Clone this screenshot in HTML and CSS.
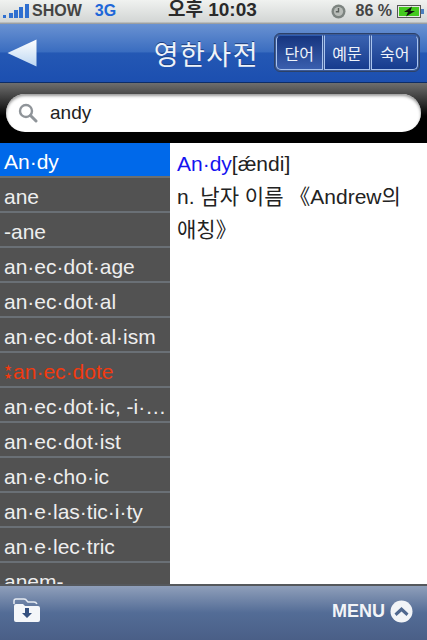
FILE: index.html
```html
<!DOCTYPE html>
<html lang="ko">
<head>
<meta charset="utf-8">
<title>영한사전</title>
<link rel="stylesheet" href="styles.css">
</head>
<body>
<div class="app">
  <header class="status">
    <div class="status-left">
      <svg class="signal" width="27" height="14" viewBox="0 0 27 14"><g fill="#2f6fd0"><rect x="1" y="11" width="3" height="3"/><rect x="7" y="9" width="4" height="5"/><rect x="12" y="6" width="4" height="8"/><rect x="17" y="3" width="4" height="11"/><rect x="23" y="0" width="4" height="14"/></g></svg>
      <span class="carrier">SHOW</span>
      <span class="net">3G</span>
    </div>
    <div class="clock">오후 10:03</div>
    <div class="status-right">
      <svg class="alarm" width="15" height="15" viewBox="0 0 15 15"><circle cx="7.5" cy="7.5" r="7" fill="#7d8480"/><circle cx="7.5" cy="7.5" r="4.6" fill="#b9bdb9"/><path d="M7.5 4v3.7H4.8" fill="none" stroke="#5c625e" stroke-width="1.4"/></svg>
      <span class="pct">86 %</span>
      <svg class="battery" width="27" height="13" viewBox="0 0 27 13"><rect x="0.5" y="0.5" width="23" height="12" fill="#e8eae6" stroke="#555"/><rect x="2" y="2" width="20" height="9" fill="#43c91e"/><rect x="24" y="4" width="3" height="5" fill="#4a7fc0"/><path d="M15 1.5 7 7h4l-2 4.5L18 6h-4.500z" fill="#111"/></svg>
    </div>
  </header>

  <nav class="nav">
    <button class="back" aria-label="뒤로">
      <svg width="30" height="28" viewBox="0 0 31 30" preserveAspectRatio="none"><defs><linearGradient id="backfill" x1="0" y1="0" x2="0" y2="1"><stop offset="0" stop-color="#fff"/><stop offset="1" stop-color="#bcd6f2"/></linearGradient></defs><path d="M0.500 15 30.500 0.500V29.500z" fill="url(#backfill)"/></svg>
    </button>
    <h1 class="title">영한사전</h1>
    <div class="seg">
      <span class="seg-item seg-on">단어</span>
      <span class="seg-item">예문</span>
      <span class="seg-item">숙어</span>
    </div>
  </nav>

  <div class="searchbar">
    <div class="field">
      <svg class="lens" width="20" height="20" viewBox="0 0 20 20"><circle cx="8" cy="8" r="6" fill="none" stroke="#8f9499" stroke-width="2.400"/><path d="M12.500 12.500 18 18" stroke="#8f9499" stroke-width="3" stroke-linecap="round"/></svg>
      <span class="query">andy</span>
    </div>
  </div>

  <main class="content">
    <ul class="list">
      <li class="row row-on">An·dy</li>
      <li class="row">ane</li>
      <li class="row">-ane</li>
      <li class="row">an·ec·dot·age</li>
      <li class="row">an·ec·dot·al</li>
      <li class="row">an·ec·dot·al·ism</li>
      <li class="row row-star"><span class="stars">★<br>★</span><span>an·ec·dote</span></li>
      <li class="row">an·ec·dot·ic, -i·cal</li>
      <li class="row">an·ec·dot·ist</li>
      <li class="row">an·e·cho·ic</li>
      <li class="row">an·e·las·tic·i·ty</li>
      <li class="row">an·e·lec·tric</li>
      <li class="row">anem-</li>
    </ul>
    <article class="entry">
      <p class="line"><span class="head">An·dy</span>[ǽndi]</p>
      <p class="line">n. 남자 이름 《Andrew의 애칭》</p>
    </article>
  </main>

  <footer class="toolbar">
    <svg class="folder" width="28" height="26" viewBox="0 0 28 26"><path d="M1 6V3q0-2 2-2h8q2 0 3 2l1 1h6q2 0 3 2" fill="none" stroke="#e6ebf2" stroke-width="1.500"/><path d="M1 8q0-2 2-2h7l2 2h13q2 0 2 2v12q0 2-2 2H3q-2 0-2-2z" fill="#f4f6f9"/><path d="M12 10h4v5h3l-5 5-5-5h3z" fill="#34507f"/></svg>
    <div class="menu">
      <span>MENU</span>
      <svg width="23" height="23" viewBox="0 0 23 23"><circle cx="11.500" cy="11.500" r="11" fill="#f2f4f7"/><path d="M4.500 13.500 11.500 7l7 6.500-2 2.500-5-4.500-5 4.500z" fill="#50688f"/></svg>
    </div>
  </footer>
</div>
</body>
</html>
```
FILE: styles.css
```css
* { box-sizing: border-box; margin: 0; padding: 0; }
html, body { width: 427px; height: 640px; overflow: hidden; background: #000; }
body { font-family: "Liberation Sans", "Noto Sans CJK KR", sans-serif; }
.app { width: 427px; height: 640px; display: flex; flex-direction: column; overflow: hidden; }

.status {
  height: 24px; flex: none; display: flex; align-items: center; justify-content: space-between;
  padding: 0 3px 2px 2px; background: linear-gradient(#f0f2f0, #d3d6d5 90%, #8e9194);
  position: relative;
}
.status-left { display: flex; align-items: center; }
.carrier { font-size: 16px; font-weight: bold; color: #444; margin-left: 3px; }
.net { font-size: 16px; font-weight: bold; color: #2067d8; margin-left: 13px; }
.clock { font-size: 19px; line-height: 22px; font-weight: bold; color: #2a2a2a; position: absolute; left: 168px; top: -1px; white-space: nowrap; }
.status-right { display: flex; align-items: center; }
.alarm { margin-right: 10px; }
.pct { font-size: 16px; font-weight: bold; color: #454545; margin-right: 5px; }

.nav {
  height: 59px; flex: none; display: flex; align-items: center; position: relative;
  padding: 0 7px 0 6px; border-bottom: 1px solid #0d2c66;
  background: linear-gradient(#6a92d2, #3a6dc0 48%, #2458b4 50%, #1c4fb0);
}
.back { border: 0; background: none; display: flex; margin-left: 1px; }
.title {
  font-size: 27px; font-weight: normal; color: #eef3fa; margin-left: auto; margin-right: 15px;
  letter-spacing: 1.5px; text-shadow: 0 -1px 0 #1c3f80;
}
.seg {
  width: 146px; height: 39px; display: flex; border: 1px solid #2c4168; border-radius: 6px; padding: 1px;
  background: #3c5a96; gap: 1px; margin-top: -1px;
}
.seg-item {
  flex: 1; display: flex; align-items: center; justify-content: center;
  font-size: 16px; color: #eef3fa; background: linear-gradient(#3a62b0, #173c8e);
  border: 1px solid #a9c4ee; border-top-color: #2c5bb0;
}
.seg-item:first-child { border-radius: 5px 0 0 5px; }
.seg-item:last-child { border-radius: 0 5px 5px 0; }
.seg-on { background: linear-gradient(#16357f, #3a5fae); }

.searchbar {
  height: 60px; flex: none; padding: 11px 6px 11px;
  background: linear-gradient(#6e6e6e, #2b2b2b 35%, #000 55%, #000);
}
.field {
  height: 38px; display: flex; align-items: center; padding-left: 12px;
  background: #fff; border-radius: 19px; box-shadow: inset 0 2px 3px #999;
}
.lens { flex: none; }
.query { font-size: 19px; color: #222; margin-left: 12px; }

.content { flex: 1; display: flex; min-height: 0; background: #fff; }
.list { width: 170px; flex: none; list-style: none; overflow: hidden; background: #525252; }
.row {
  height: 35px; padding: 0 0 0 4px; font-size: 21px; line-height: 37px; color: #eee;
  white-space: nowrap; overflow: hidden; text-overflow: ellipsis; border-bottom: 2px solid #6a7076;
}
.row-on { background: #0069ea; color: #fff; border-bottom-color: #6b6f70; }
.row-star { color: #f03a10; display: flex; align-items: flex-start; gap: 1px; }
.stars { font-size: 9px; line-height: 8px; margin-top: 11px; font-family: "DejaVu Sans", sans-serif; }
.entry { flex: 1; padding: 4px 6px 0 7px; font-size: 21px; line-height: 33px; color: #222; word-break: keep-all; }
.head { color: #1414f0; }

.toolbar {
  height: 56px; flex: none; display: flex; align-items: center; justify-content: space-between;
  padding: 0 14px 4px 13px; border-top: 2px solid #55585c;
  background: linear-gradient(#8f9fba, #536c96 50%, #4a5f87);
}
.menu { display: flex; align-items: center; gap: 5px; font-size: 18px; font-weight: bold; color: #f2f4f7; }
```
